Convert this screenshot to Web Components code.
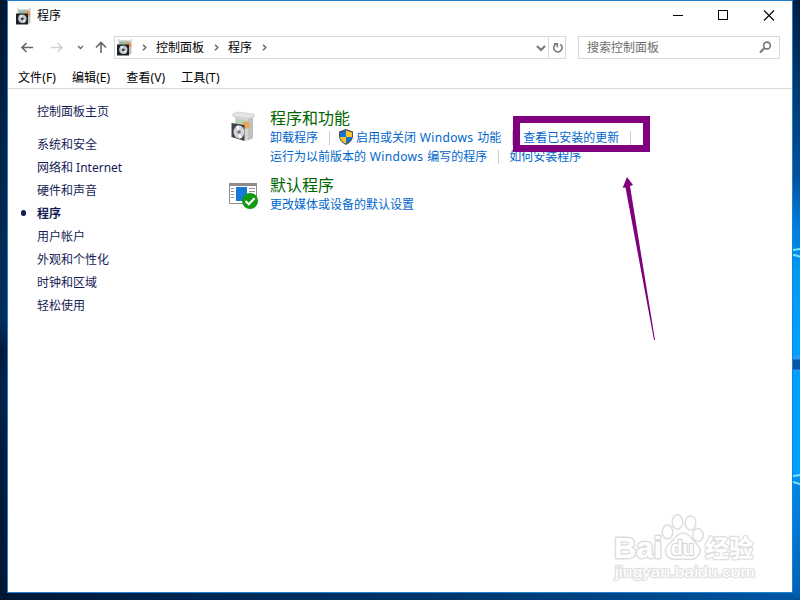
<!DOCTYPE html>
<html lang="zh-CN">
<head>
<meta charset="utf-8">
<title>程序</title>
<style>
html,body{margin:0;width:800px;height:600px;overflow:hidden}
body{font-family:"Noto Sans","Noto Sans CJK SC",sans-serif;font-size:12px;color:#000}
</style>
</head>
<body>
<desktop-scene></desktop-scene>
<script>
function define(name, html, setup){
  const t=document.createElement('template');
  t.innerHTML=html;
  customElements.define(name, class extends HTMLElement{
    constructor(){
      super();
      this.attachShadow({mode:'open'}).append(t.content.cloneNode(true));
      if(setup) setup(this,this.shadowRoot);
    }
  });
}

define('disc-icon', `<style>:host{display:block;width:16px;height:17px;flex:none}svg{display:block;width:100%;height:100%}</style>
<svg viewBox="0 0 16 17"><path d="M1.500 1h13v14l-3 1h-10z" fill="#bfc2bf"/><path d="M1 0l3 1h8l3-1v2.500H1z" fill="#d8d8d6"/><path d="M3 2.500h9v5H3z" fill="#8fbfa4"/><circle cx="11.300" cy="6" r="3" fill="#e09a5c"/><path d="M0 5.500h12v11H0z" fill="#1f2226"/><circle cx="6.300" cy="10.800" r="4.200" fill="#c3c7c9"/><path d="M6.300 10.800L3 7.800 5 6.700zM6.300 10.800l3.500 2.500-2 1.500z" fill="#f4f4f4"/><circle cx="6.300" cy="10.800" r="1.400" fill="#33373b"/></svg>`);

define('window-title', `<style>
:host{display:flex;height:30px;align-items:center;padding-left:8px;box-sizing:border-box}
span{margin-left:5px;line-height:18px;flex:1}svg{display:block}
</style><disc-icon></disc-icon><span>程序</span>
<svg width="119" height="30" viewBox="673 0 119 30" fill="none" stroke="#000"><path d="M673 14.500h10M718.500 9.500h9v9h-9z" shape-rendering="crispEdges"/><path d="M764 9.500l10 10m0-10l-10 10" stroke-width="1.100"/></svg>`);

define('nav-bar', `<style>
:host{display:flex;height:34px;box-sizing:border-box;padding:5px 11px 6px 8px}
.nav{display:block;flex:none}
.address,.search{box-sizing:border-box;border:1px solid #d9d9d9;height:23px;display:flex;align-items:center}
.address{width:452px;padding-left:2px}.search{width:202px;margin-left:12px;padding:0 7px 0 8px;color:#6d6d6d}
.chev{width:5px;height:7px;margin:0 9px 0 10px;flex:none}
.search span{flex:1}.address disc-icon{margin-right:-1px}
span{line-height:18px}.tools{margin-left:auto}
</style>
<svg class="nav" width="98" height="23" viewBox="16 36 98 23" fill="none" stroke="#666" stroke-width="1.600"><path d="M33 47.500H22m4.500-4.500L22 47.500l4.500 4.500"/><path d="M51 47.500h11m-4.500-4.500l4.500 4.500-4.500 4.500" stroke="#d2d2d2"/><path d="M78 46l2.500 2.500L83 46" stroke-width="1.300"/><path d="M101 53V42.500m-5 5l5-5 5 5"/></svg>
<div class="address"><disc-icon></disc-icon>
<svg class="chev" viewBox="0 0 5 7"><path d="M1 .7l2.800 2.800L1 6.300" fill="none" stroke="#666" stroke-width="1.400"/></svg><span>控制面板</span>
<svg class="chev" viewBox="0 0 5 7"><path d="M1 .7l2.800 2.800L1 6.300" fill="none" stroke="#666" stroke-width="1.400"/></svg><span>程序</span>
<svg class="chev" viewBox="0 0 5 7"><path d="M1 .7l2.800 2.800L1 6.300" fill="none" stroke="#666" stroke-width="1.400"/></svg>
<svg class="tools" width="30" height="21" viewBox="535 37 30 21" fill="none" stroke="#777"><path d="M537 46l4 4 4-4" stroke-width="2"/><path d="M548.500 37v21" stroke="#d9d9d9"/><path d="M560.300 44.300a4.200 4.200 0 1 1-4.800 0M554 43.800h3.300v3.500" stroke-width="1.600"/></svg></div>
<div class="search"><span>搜索控制面板</span><svg width="13" height="13" viewBox="0 0 13 13" fill="none" stroke="#777"><circle cx="8" cy="4.500" r="3.400" stroke-width="1.600"/><path d="M5.500 7L1 11.500" stroke-width="2"/></svg></div>`);

define('menu-bar', `<style>:host{display:flex;height:24px;box-sizing:border-box;padding:4px 0 0 10px;border-bottom:1px solid #d9d9d9;gap:16px;line-height:18px}span{white-space:nowrap;letter-spacing:.1px}</style>
<span>文件(F)</span><span>编辑(E)</span><span>查看(V)</span><span>工具(T)</span>`);

define('side-link', `<style>:host{display:flex;align-items:center;height:23px;color:#151c55;white-space:nowrap}i{width:5.500px;height:5.500px;border-radius:50%;margin:1px 11px 0 12.500px;flex:none}:host([current]){font-weight:700}:host([current]) i{background:#151c55}</style><i></i><slot></slot>`);

define('side-nav', `<style>:host{display:block;width:220px;padding-top:10px;flex:none}.home{margin-bottom:10px}</style>
<side-link class="home">控制面板主页</side-link><side-link>系统和安全</side-link><side-link>网络和 Internet</side-link><side-link>硬件和声音</side-link><side-link current>程序</side-link><side-link>用户帐户</side-link><side-link>外观和个性化</side-link><side-link>时钟和区域</side-link><side-link>轻松使用</side-link>`);

define('task-link', `<style>:host{display:flex;align-items:center;color:#0066cc;white-space:nowrap;line-height:19px;word-spacing:.6px}:host([divided])::after{content:"";width:1px;height:14px;background:#ccc;margin:0 10px 0 11px}</style><slot name="icon"></slot><span><slot></slot></span>`);

define('category-block', `<style>:host{display:flex;height:67px}.icon{width:42px;flex:none}h2{font-size:16px;line-height:19px;height:19px;margin:0;color:#006600;font-weight:400}</style><div class="icon"><slot name="icon"></slot></div><div><h2><slot name="title"></slot></h2><slot></slot></div>`);

define('category-list', `<style>
:host{display:block;padding-top:20px}.row{display:flex;height:19px}svg{display:block}.shield{margin:0 2px 0 -2px}
.latin{letter-spacing:.35px}
</style>
<category-block><svg slot="icon" width="34" height="38" viewBox="228 109 34 38"><path d="M235 116l18-1v23l-7 3-11-4z" fill="#d4d5d3"/><path d="M233 114l4-2 17 2v3l-6 1.500-15-2z" fill="#e4e4e2" stroke="#c3c3c1" stroke-width=".6"/><path d="M248 119l5-1v20l-5 2.500z" fill="#bfc1c0"/><path d="M236 119l10 1.500v8l-10-2z" fill="#b7d4b7"/><circle cx="246" cy="125" r="3.700" fill="#eaa558"/><path d="M231.500 123l13 2v16l-13-4z" fill="#3f4348"/><ellipse cx="239" cy="132" rx="5.500" ry="6.500" fill="#d0d4d8"/><path d="M239 132l-3-6 3-.5zm0 0l3 6-3 .5z" fill="#fff"/><circle cx="239" cy="132" r="1.800" fill="#777"/></svg><span slot="title">程序和功能</span>
<div class="row"><task-link divided>卸载程序</task-link><task-link divided><svg slot="icon" class="shield" width="16" height="17" viewBox="0 0 16 17"><path d="M8 0l7 2.500v5Q14.500 13 8 16 1.500 13 1 7.500v-5z" fill="#4f5257"/><path d="M8 1.500V8H2V3.500zM8 8h6q-.5 4-6 6.700z" fill="#1473ca"/><path d="M8 1.500L14 3.500V8H8zM2 8h6v6.700Q2.500 12 2 8z" fill="#ffc32b"/></svg>启用或关闭 <span class="latin">Windows</span> 功能</task-link><task-link divided>查看已安装的更新</task-link></div>
<div class="row"><task-link divided>运行为以前版本的 <span class="latin">Windows</span> 编写的程序</task-link><task-link>如何安装程序</task-link></div></category-block>
<category-block><svg slot="icon" width="34" height="38" viewBox="228 176 34 38"><path d="M229.500 183.500h27v20h-27z" fill="#fff" stroke="#8d8d8d"/><path d="M229 183h28v3h-28z" fill="#8d8d8d"/><path d="M236 187h11v14h-11z" fill="#1779d5"/><path d="M231 188.500h3m-3 3h3m-3 3h3m-3 3h3M249 188.500h6m-6 3h6m-6 3h6" stroke="#8a9097"/><circle cx="250" cy="201" r="8" fill="#129b12"/><path d="M245.500 201l3.300 3.300 5.700-6" fill="none" stroke="#fff" stroke-width="2"/></svg><span slot="title">默认程序</span><div class="row"><task-link>更改媒体或设备的默认设置</task-link></div></category-block>`);

define('panel-window', `<style>:host{display:block;box-sizing:border-box;width:786px;height:593px;border:1px solid #1c82d4;background:#fff;overflow:hidden}.body{display:flex}</style><window-title></window-title><nav-bar></nav-bar><menu-bar></menu-bar><div class="body"><side-nav></side-nav><category-list></category-list></div>`);

define('mark-up', `<style>:host{position:absolute;inset:0;pointer-events:none}svg{display:block}</style>
<svg width="800" height="600"><path d="M516.500 119.500h130v29h-130z" fill="none" stroke="#800080" stroke-width="7"/><path d="M627 177l6 8-3 1 25 154h-1L625.500 187.500l-2.800.3z" fill="#800080"/></svg>`);

define('site-watermark', `<style>:host{position:absolute;left:605px;top:505px;pointer-events:none}svg{display:block}</style>
<svg width="160" height="85" viewBox="605 505 160 85" fill="#fff" stroke="#dfdfdf" stroke-width="1.600" stroke-linejoin="round"><g font-family="Liberation Sans" font-weight="700"><text x="614" y="558" font-size="30" textLength="48" lengthAdjust="spacingAndGlyphs" stroke-width="3" paint-order="stroke">Bai</text><ellipse cx="667.500" cy="532" rx="5.300" ry="7"/><ellipse cx="677.500" cy="522" rx="5.300" ry="7.200"/><ellipse cx="690.500" cy="523" rx="5.300" ry="7"/><ellipse cx="698" cy="535" rx="5.300" ry="6.500"/><path d="M683 533c6 0 8 5 12 9 5 5 7 9 3 14-4 5-9 3-15 3s-11 2-15-2c-5-5-2-11 3-15s6-9 12-9z"/><text x="671" y="555" font-size="20" textLength="23" lengthAdjust="spacingAndGlyphs" stroke-width="2.600" stroke="#d8d8d8" paint-order="stroke">du</text></g><text x="705" y="557" font-size="24" font-weight="700" font-family="Liberation Sans, Noto Sans CJK SC" stroke-width="2.600" paint-order="stroke">经验</text><text x="615" y="577" font-size="15" font-family="Liberation Sans" textLength="140" lengthAdjust="spacingAndGlyphs" stroke="#e2e2e2" stroke-width="2.400" paint-order="stroke">jingyan.baidu.com</text></svg>`);

define('desktop-scene', `<style>
:host{display:block;position:relative;width:800px;height:600px;box-sizing:border-box;padding-left:7px;overflow:hidden;background:linear-gradient(90deg,#001634,#002651 25%,#00386f 60%,#0057a5)}
.left,.right{position:absolute;top:0;bottom:0}.left{left:0;width:7px;background:linear-gradient(#00152e,#002347 130px,#002e5c 320px,#001a3d 350px,#002448 385px,#001b3c 470px,#001733)}
.right{left:793px;width:7px;background:linear-gradient(#001d42,#003a70 90px,#0053a0 180px,#0078d7 219px,#0086e6 245px,#009bf5 270px,#00a2ff 355px,#2b9cf4 357px,#2b9cf4 359px,#0658a6 360px,#0658a6 369px,#299af2 370px,#00a2ff 373px,#00a2ff 470px,#0086e6 487px,#0078d7 530px,#0061b3 593px,#004f96)}
</style><div class="left"></div><div class="right"><svg width="7" height="600"><path d="M0 250l7-1M0 255q4 0 7 2M0 476l7-1M0 482l7 2" stroke="#7be5ff" stroke-width="2" fill="none"/></svg></div><panel-window></panel-window><mark-up></mark-up><site-watermark></site-watermark>`);
</script>
</body>
</html>
